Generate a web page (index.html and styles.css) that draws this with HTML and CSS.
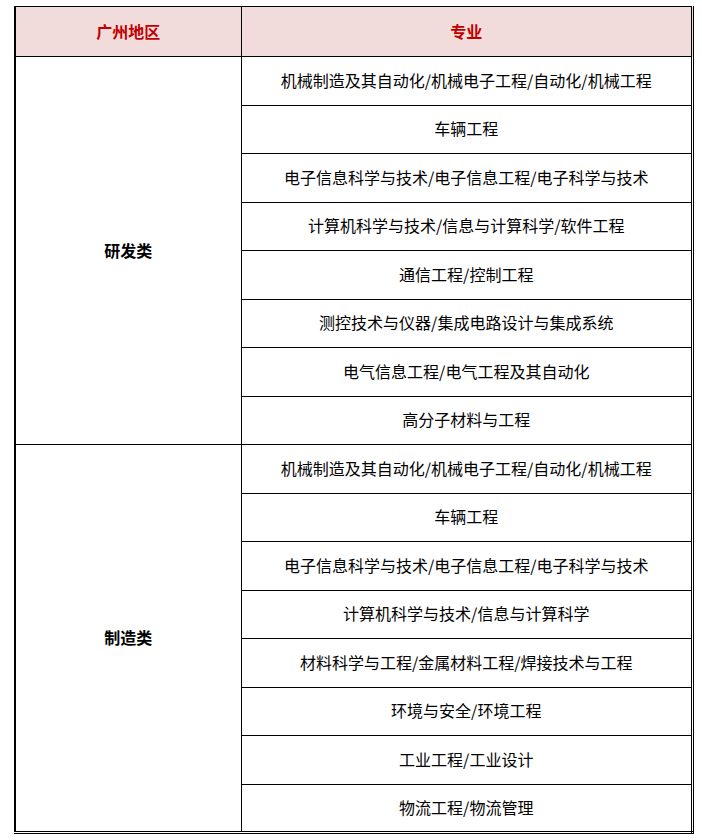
FILE: index.html
```html
<!DOCTYPE html>
<html lang="zh">
<head>
<meta charset="utf-8">
<link rel="stylesheet" href="styles.css">
</head>
<body>
<table class="major-table">
  <colgroup><col class="col-area"><col class="col-major"></colgroup>
  <thead>
    <tr class="head-row"><th>广州地区</th><th>专业</th></tr>
  </thead>
  <tbody>
    <tr><td class="cat" rowspan="8">研发类</td><td>机械制造及其自动化/机械电子工程/自动化/机械工程</td></tr>
    <tr><td>车辆工程</td></tr>
    <tr><td>电子信息科学与技术/电子信息工程/电子科学与技术</td></tr>
    <tr><td>计算机科学与技术/信息与计算科学/软件工程</td></tr>
    <tr><td>通信工程/控制工程</td></tr>
    <tr><td>测控技术与仪器/集成电路设计与集成系统</td></tr>
    <tr><td>电气信息工程/电气工程及其自动化</td></tr>
    <tr><td>高分子材料与工程</td></tr>
    <tr><td class="cat" rowspan="8">制造类</td><td>机械制造及其自动化/机械电子工程/自动化/机械工程</td></tr>
    <tr><td>车辆工程</td></tr>
    <tr><td>电子信息科学与技术/电子信息工程/电子科学与技术</td></tr>
    <tr><td>计算机科学与技术/信息与计算科学</td></tr>
    <tr><td>材料科学与工程/金属材料工程/焊接技术与工程</td></tr>
    <tr><td>环境与安全/环境工程</td></tr>
    <tr><td>工业工程/工业设计</td></tr>
    <tr><td>物流工程/物流管理</td></tr>
  </tbody>
</table>
</body>
</html>
```
FILE: styles.css
```css
html, body {
  margin: 0;
  padding: 0;
  background: #ffffff;
}
body {
  font-family: "Noto Sans CJK SC", "Noto Sans", sans-serif;
  font-size: 16px;
  color: #000000;
}
.major-table {
  margin: 6px 0 0 14px;
  width: 680px;
  border-collapse: collapse;
  table-layout: fixed;
  border-top: 1px solid #000;
  border-left: 2px solid #000;
  border-right: 3px double #000;
  border-bottom: 3px double #000;
}
.col-area { width: 226px; }
.major-table th,
.major-table td {
  border: 1px solid #000;
  padding: 0 0 2px 0;
  text-align: center;
  vertical-align: middle;
  line-height: 20px;
}
.head-row th {
  height: 47px;
  background: #f2dcdb;
  color: #c00000;
  font-weight: bold;
}
.major-table tbody tr {
  height: 48.5px;
}
.cat {
  font-weight: bold;
}
```
